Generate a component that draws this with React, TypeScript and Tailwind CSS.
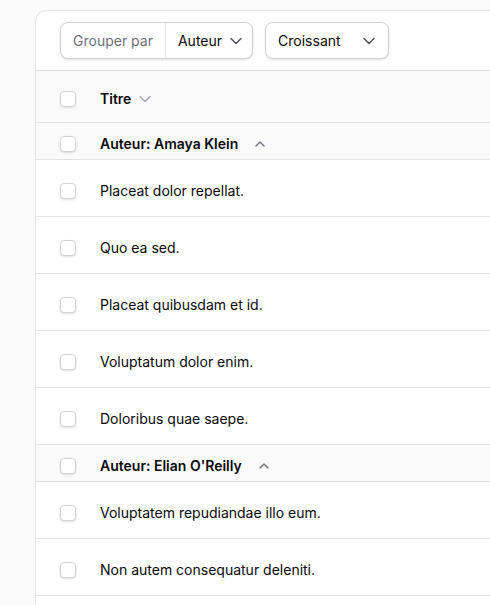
import { ChevronDown, ChevronUp } from "lucide-react";

const groups = [
  {
    author: "Amaya Klein",
    rows: [
      "Placeat dolor repellat.",
      "Quo ea sed.",
      "Placeat quibusdam et id.",
      "Voluptatum dolor enim.",
      "Doloribus quae saepe.",
    ],
  },
  {
    author: "Elian O'Reilly",
    rows: ["Voluptatem repudiandae illo eum.", "Non autem consequatur deleniti."],
  },
];

function Checkbox() {
  return (
    <span className="block h-4 w-4 shrink-0 rounded border border-[#d4d4d8] bg-white shadow-sm" />
  );
}

export default function App() {
  return (
    <div
      className="h-[605px] overflow-hidden bg-[#fafafa] pl-[35px] pt-[10px] text-sm text-[#09090b]"
      style={{ fontFamily: "Inter, 'Noto Sans', sans-serif" }}
    >
      <div className="mr-[-30px] rounded-xl border border-[#e4e4e7] bg-white">
        {/* toolbar */}
        <div className="flex h-[60px] items-center gap-[12px] border-b border-[#e4e4e7] px-6">
          <div className="flex h-[37px] items-center rounded-lg border border-[#d4d4d8] bg-white shadow-sm">
            <span className="flex h-full items-center border-r border-[#e4e4e7] px-3 text-[#71717a]">
              Grouper par
            </span>
            <span className="flex items-center gap-1 pl-3 pr-[6px]">
              Auteur
              <ChevronDown size={20} strokeWidth={1.8} className="text-[#52525b]" />
            </span>
          </div>
          <div className="flex h-[37px] w-[124px] items-center justify-between rounded-lg border border-[#d4d4d8] bg-white pl-3 pr-[9px] shadow-sm">
            Croissant
            <ChevronDown size={20} strokeWidth={1.8} className="text-[#52525b]" />
          </div>
        </div>

        {/* header */}
        <div className="flex h-[52px] items-center gap-6 border-b border-[#e4e4e7] bg-[#fafafa] px-6 pt-[5px]">
          <Checkbox />
          <span className="flex items-center gap-1 font-semibold">
            Titre
            <ChevronDown size={20} strokeWidth={1.5} className="text-[#a1a1aa]" />
          </span>
        </div>

        {groups.map((g) => (
          <div key={g.author}>
            <div className="flex h-[37px] items-center gap-6 border-b border-[#e4e4e7] bg-[#fafafa] px-6 pt-[5px]">
              <Checkbox />
              <span className="flex items-center gap-[14px] font-semibold">
                Auteur: {g.author}
                <ChevronUp size={16} strokeWidth={2} className="text-[#71717a]" />
              </span>
            </div>
            {g.rows.map((r) => (
              <div
                key={r}
                className="flex h-[57px] items-center gap-6 border-b border-[#e4e4e7] px-6 pt-[5px]"
              >
                <Checkbox />
                <span>{r}</span>
              </div>
            ))}
          </div>
        ))}
        <div className="h-[40px]" />
      </div>
    </div>
  );
}
